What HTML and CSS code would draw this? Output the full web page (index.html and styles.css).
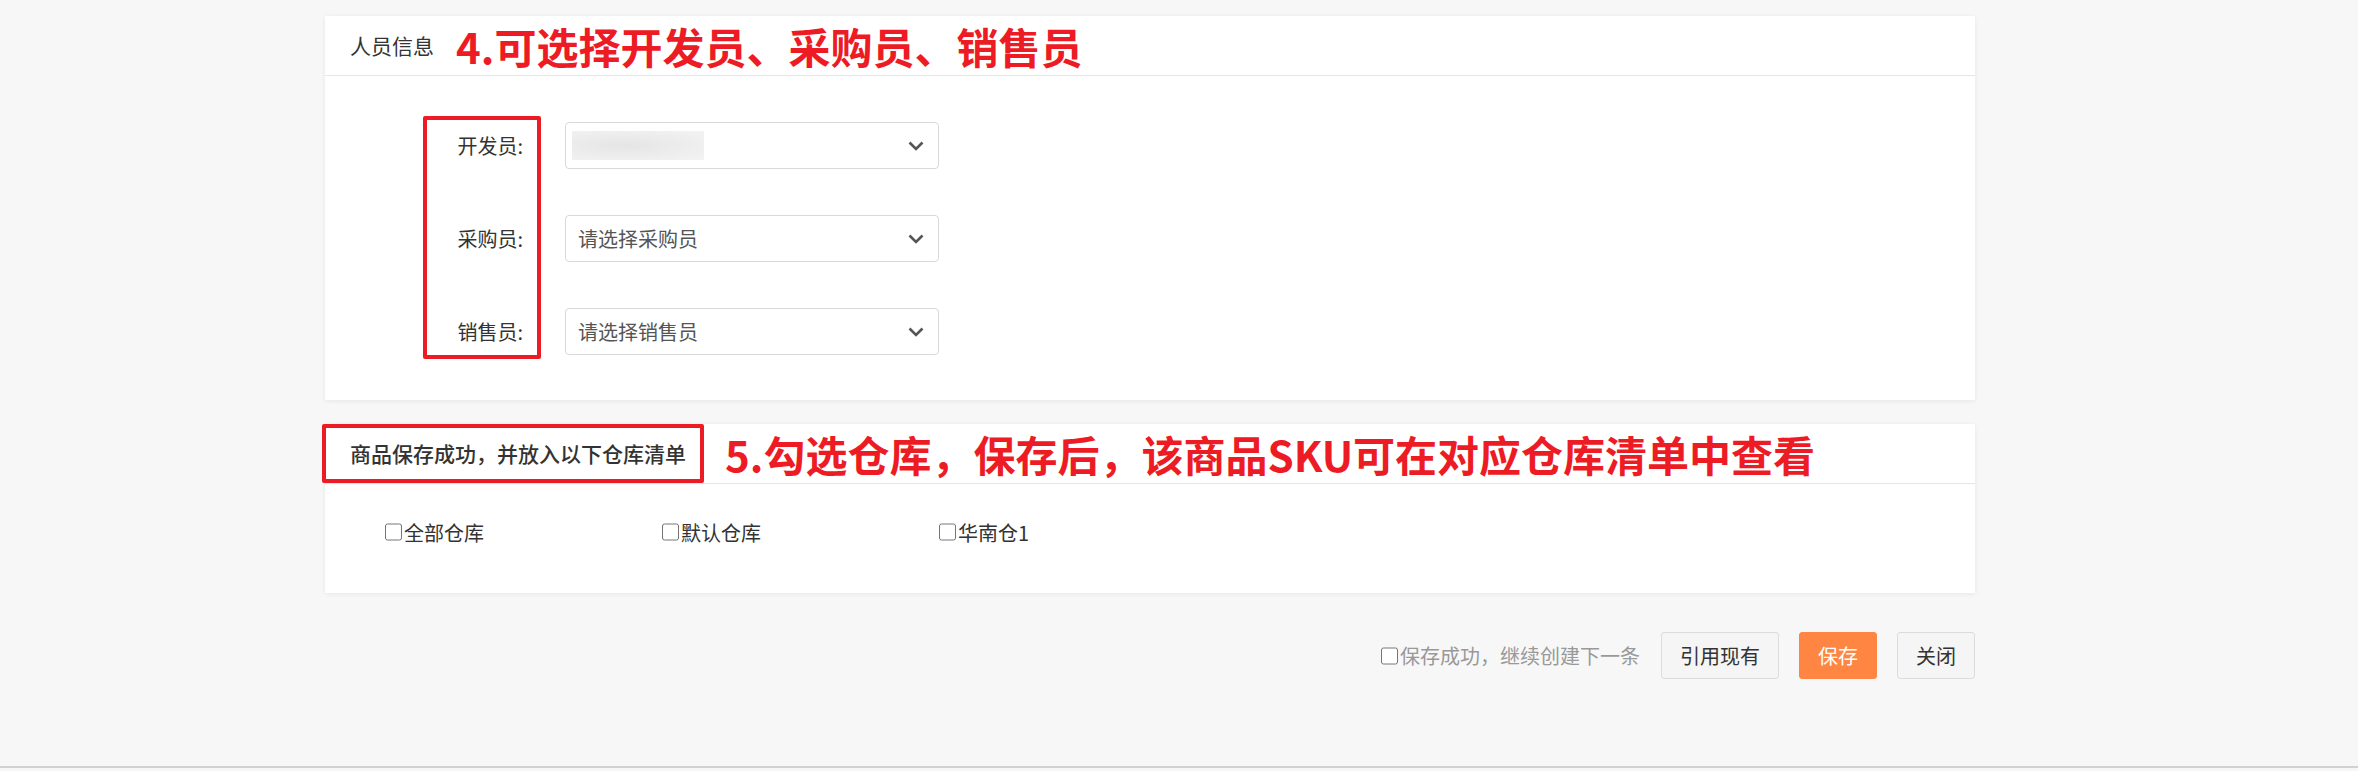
FILE: index.html
```html
<!DOCTYPE html>
<html lang="zh-CN">
<head>
<meta charset="utf-8">
<title>商品信息</title>
<link rel="stylesheet" href="styles.css">
</head>
<body>
<div class="page">
  <section class="card">
    <div class="card-head">
      <h2 class="card-title">人员信息</h2>
      <span class="note">4.可选择开发员、采购员、销售员</span>
    </div>
    <div class="form-body">
      <div class="labels">
        <label class="lbl">开发员:</label>
        <label class="lbl">采购员:</label>
        <label class="lbl">销售员:</label>
      </div>
      <div class="fields">
        <div class="select">
          <span class="blurred"></span>
          <svg class="chev" width="16" height="10" viewBox="0 0 16 10"><polyline points="1.5,1.5 8,8 14.5,1.5" fill="none" stroke="#555" stroke-width="2.6"/></svg>
        </div>
        <div class="select">
          <span>请选择采购员</span>
          <svg class="chev" width="16" height="10" viewBox="0 0 16 10"><polyline points="1.5,1.5 8,8 14.5,1.5" fill="none" stroke="#555" stroke-width="2.6"/></svg>
        </div>
        <div class="select">
          <span>请选择销售员</span>
          <svg class="chev" width="16" height="10" viewBox="0 0 16 10"><polyline points="1.5,1.5 8,8 14.5,1.5" fill="none" stroke="#555" stroke-width="2.6"/></svg>
        </div>
      </div>
    </div>
  </section>

  <section class="card card-wh">
    <div class="card-head head-wh">
      <h2 class="card-title boxed">商品保存成功，并放入以下仓库清单</h2>
      <span class="note note-wh">5.勾选仓库，保存后，该商品SKU可在对应仓库清单中查看</span>
    </div>
    <div class="wh-body">
      <label class="chk"><input type="checkbox">全部仓库</label>
      <label class="chk"><input type="checkbox">默认仓库</label>
      <label class="chk"><input type="checkbox">华南仓1</label>
    </div>
  </section>

  <div class="actions">
    <label class="save-next"><input type="checkbox">保存成功，继续创建下一条</label>
    <button class="btn">引用现有</button>
    <button class="btn btn-primary">保存</button>
    <button class="btn">关闭</button>
  </div>
</div>
<div class="bottom-rule"></div>
</body>
</html>
```

FILE: styles.css
```css
html, body {
  margin: 0;
  padding: 0;
}
body {
  background: #f7f7f7;
  font-family: "Noto Sans CJK SC", "Noto Sans", sans-serif;
  color: #333;
}
.page {
  width: 1650px;
  margin-left: 325px;
  padding-top: 16px;
}
.card {
  background: #fff;
  box-shadow: 0 1px 5px rgba(0, 0, 0, 0.07);
}
.card + .card {
  margin-top: 24px;
}
.card-head {
  height: 59px;
  border-bottom: 1px solid #e6e6e6;
  display: flex;
  align-items: center;
  padding-left: 25px;
}
.card-title {
  margin: 0;
  font-size: 21px;
  font-weight: 400;
  color: #333;
  line-height: 1;
}
.note {
  color: #ed1c24;
  font-weight: 700;
  font-size: 42px;
  line-height: 1;
  margin-left: 22px;
  white-space: nowrap;
}
.head-wh {
  padding-left: 0;
  align-items: stretch;
}
.boxed {
  box-sizing: border-box;
  margin-left: -3px;
  border: 4px solid #ed1c24;
  border-radius: 2px;
  padding: 0 14px 0 24px;
  display: flex;
  align-items: center;
  font-weight: 500;
}
.note-wh {
  align-self: center;
  margin-left: 21px;
}
.form-body {
  display: flex;
  padding: 40px 0 41px 98px;
}
.labels {
  box-sizing: border-box;
  width: 118px;
  border: 4px solid #ed1c24;
  border-radius: 2px;
  padding: 2px 14px 0 0;
  margin-right: 24px;
  display: flex;
  flex-direction: column;
  gap: 46px;
}
.lbl {
  height: 47px;
  display: flex;
  align-items: center;
  justify-content: flex-end;
  font-size: 20px;
  color: #333;
}
.fields {
  padding-top: 6px;
  display: flex;
  flex-direction: column;
  gap: 46px;
}
.select {
  box-sizing: border-box;
  width: 374px;
  height: 47px;
  border: 1px solid #d9d9d9;
  border-radius: 4px;
  display: flex;
  align-items: center;
  justify-content: space-between;
  padding: 0 14px 0 12px;
  font-size: 20px;
  color: #555;
}
.blurred {
  width: 132px;
  height: 29px;
  margin-left: -6px;
  background: radial-gradient(ellipse at 40% 50%, #e5e5e5 0%, #ededed 55%, #f3f3f3 100%);
}
.chev {
  display: block;
}
.wh-body {
  display: flex;
  padding: 36px 0 49px 60px;
}
.chk {
  width: 277px;
  height: 24px;
  display: flex;
  align-items: center;
  font-size: 20px;
  color: #333;
}
.chk input,
.save-next input {
  width: 17px;
  height: 18px;
  margin: 0 2px 0 0;
}
.actions {
  margin-top: 39px;
  display: flex;
  justify-content: flex-end;
  align-items: center;
  gap: 20px;
}
.save-next {
  display: flex;
  align-items: center;
  font-size: 20px;
  color: #999;
  margin-right: 1px;
}
.btn {
  height: 47px;
  padding: 0 18px;
  font-family: inherit;
  font-size: 20px;
  color: #333;
  background: #f5f5f5;
  border: 1px solid #dcdcdc;
  border-radius: 3px;
}
.btn-primary {
  background: #ff8642;
  border-color: #ff8642;
  color: #fff;
}
.bottom-rule {
  margin-top: 87px;
  border-top: 2px solid #d2d2d2;
}
```
